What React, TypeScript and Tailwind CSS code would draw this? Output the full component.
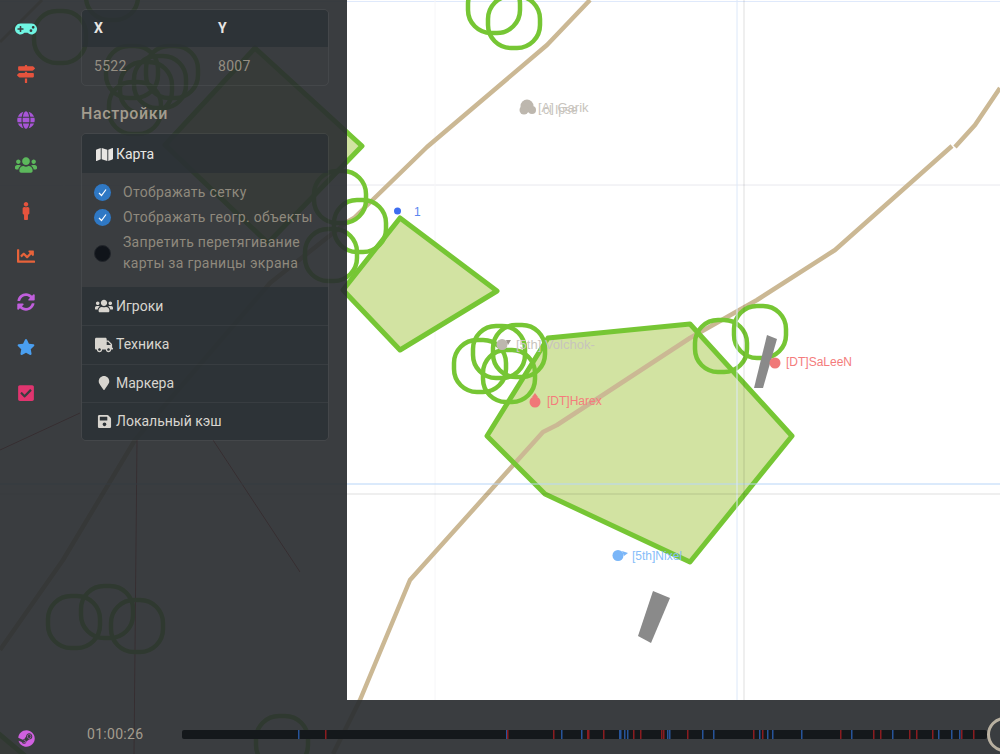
import React from "react";
import {
  FaGamepad,
  FaMapSigns,
  FaGlobe,
  FaUsers,
  FaMale,
  FaChartLine,
  FaSyncAlt,
  FaStar,
  FaCheckSquare,
  FaSteam,
  FaMap,
  FaTruck,
  FaMapMarker,
  FaSave,
} from "react-icons/fa";

const railIcons = [
  { Icon: FaGamepad, color: "text-[#6ff5e2]", size: 22 },
  { Icon: FaMapSigns, color: "text-[#e5533d]", size: 18 },
  { Icon: FaGlobe, color: "text-[#a855d8]", size: 18 },
  { Icon: FaUsers, color: "text-[#5cb85c]", size: 22 },
  { Icon: FaMale, color: "text-[#e5533d]", size: 18 },
  { Icon: FaChartLine, color: "text-[#e8633a]", size: 18 },
  { Icon: FaSyncAlt, color: "text-[#c05fdc]", size: 18 },
  { Icon: FaStar, color: "text-[#4a9ff0]", size: 18 },
  { Icon: FaCheckSquare, color: "text-[#e0356f]", size: 18 },
];

const menuRows = [
  { Icon: FaUsers, label: "Игроки", size: 18 },
  { Icon: FaTruck, label: "Техника", size: 18 },
  { Icon: FaMapMarker, label: "Маркера", size: 14 },
  { Icon: FaSave, label: "Локальный кэш", size: 15 },
];

// x position on the page of each event tick
const blueTicks = [298, 506, 561, 581, 619, 620, 624, 627, 667, 669, 702, 713, 759, 767, 772, 801, 851, 892, 938, 951, 959];
const redTicks = [325, 507, 553, 587, 588, 603, 633, 640, 661, 663, 687, 753, 762, 840, 873, 880, 909, 916, 932, 961, 973];

const polygons = [
  "548,338 690,324 792,436 690,562 545,494 487,436",
  "400,218 497,291 400,350 343,290",
  "255,48 362,146 268,243 165,145",
  "-20,718 30,760 -20,770",
];

const rings = [
  [494, 7], [514, 22], [340, 197], [360, 226], [331, 255],
  [480, 366], [499, 352], [519, 351], [509, 376], [721, 346], [760, 332],
  [60, 37], [112, -6], [74, 622], [107, 612], [137, 626], [282, 742],
  [132, 72], [160, 82], [172, 72], [135, 108], [146, 88],
];

function MapLayer() {
  return (
    <svg className="absolute inset-0" width="1000" height="754" viewBox="0 0 1000 754">
      <rect width="1000" height="754" fill="#ffffff" />
      <g fill="none" strokeWidth="1">
        <path d="M0 1.5H1000" stroke="#dfe9fb" />
        <path d="M0 185H1000" stroke="#e8e8ee" />
        <path d="M435 0V754M64 0V754" stroke="#f6f6f8" />
      </g>
      {/* fills go under the road, outlines over it */}
      <g fill="#d2e3a2">
        {polygons.map((p) => (
          <polygon key={p} points={p} />
        ))}
      </g>
      <g fill="none" stroke="#cbb894" strokeWidth="4.5" strokeLinejoin="round">
        <path d="M590 0L547 45L427 147L390 183L354 218L347 222L270 283L135 440L63 560L0 650" />
        <path d="M333 754L360 700L410 580L543 432L557 425L690 338L757 300L835 250L952 146" />
        <path d="M955 147L975 125L1000 88" />
        <path d="M0 42L42 0" strokeWidth="3" />
      </g>
      <g fill="none" stroke="#c23a3a" strokeWidth="1">
        <path d="M0 450L80 413M137 440L134 754M213 440L300 572" />
      </g>
      <g fill="none" stroke="#76c634" strokeWidth="5" strokeLinejoin="round">
        {polygons.map((p) => (
          <polygon key={p} points={p} />
        ))}
      </g>
      <g fill="none" stroke="#76c634" strokeWidth="4.5">
        {rings.map(([cx, cy], i) => (
          <rect key={i} x={cx - 26} y={cy - 26} width="52" height="52" rx="23" />
        ))}
      </g>
      <g fill="none" strokeWidth="1">
        <path d="M0 484H1000" stroke="#b7d5f8" />
        <path d="M737 0V700" stroke="#dce8f9" />
        <path d="M0 494H1000M744 0V700" stroke="#000000" strokeOpacity="0.13" />
      </g>
      <g fill="#8a8a8a">
        <polygon points="767,335 777,339 763,388 754,388" />
        <polygon points="653,591 670,598 651,643 638,636" />
      </g>
      <g className="[font-family:'Liberation_Sans',sans-serif]" fontSize="12">
        <circle cx="397.5" cy="211" r="3.5" fill="#3d6df0" />
        <text x="414" y="216" fill="#5a86f0">1</text>
        <circle cx="775" cy="363" r="5.5" fill="#f07878" />
        <text x="786" y="366" fill="#f47c7c">[DT]SaLeeN</text>
        <circle cx="535" cy="402" r="5.5" fill="#f07878" />
        <polygon points="532,397 535,393 538,397" fill="#f07878" />
        <text x="547" y="405" fill="#f47c7c">[DT]Harex</text>
        <circle cx="502" cy="344.5" r="5.5" fill="#bdb7ae" />
        <polygon points="506,340 511,340 508,345" fill="#9c968c" />
        <text x="516" y="349" fontSize="13" fill="#c8c4bd">[5th] Volchok-</text>
        <circle cx="618" cy="555.5" r="5.5" fill="#7ab6f8" />
        <polygon points="622,551 628,553 624,556" fill="#7ab6f8" />
        <text x="632" y="560" fill="#86bdf9">[5th]Nixel</text>
        <circle cx="527" cy="106" r="6.5" fill="#bdb7ae" />
        <circle cx="524" cy="110" r="4.5" fill="#bdb7ae" />
        <circle cx="532" cy="110" r="4" fill="#bdb7ae" />
        <text x="538" y="112" fontSize="13" fill="#c8c4bd">[A] Garik</text>
        <text x="543" y="114" fill="#c8c4bd">cl Ipse</text>
      </g>
    </svg>
  );
}

function CheckRow({ checked, children }: { checked: boolean; children: React.ReactNode }) {
  return (
    <label className="flex items-center gap-3">
      <span
        className={
          checked
            ? "flex h-[17px] w-[17px] shrink-0 items-center justify-center rounded-full bg-[#2f78c4]"
            : "h-[17px] w-[17px] shrink-0 rounded-full border border-[#23272c] bg-[#10141a]"
        }
      >
        {checked && (
          <svg width="11" height="11" viewBox="0 0 11 11" fill="none" stroke="#ffffff" strokeWidth="1.2">
            <path d="M2 6L4.5 8.5L9 2.5" />
          </svg>
        )}
      </span>
      <span className="whitespace-nowrap text-[14px] leading-[21px] tracking-[0.3px] text-[#8f897d]">{children}</span>
    </label>
  );
}

export default function App() {
  return (
    <div className="relative flex h-[754px] w-[1000px] flex-col overflow-hidden bg-white [font-family:Roboto,sans-serif]">
      <MapLayer />

      <div className="relative flex h-[700px] w-[347px] bg-[#292d30]/92">
        {/* icon rail */}
        <div className="flex w-[52px] shrink-0 flex-col items-center pt-[6px]">
          {railIcons.map(({ Icon, color, size }, i) => (
            <div key={i} className={`flex h-[45.5px] shrink-0 items-center justify-center ${color}`}>
              <Icon size={size} />
            </div>
          ))}
        </div>

        <div className="ml-[29px] w-[248px] pt-[9px]">
          <div className="overflow-hidden rounded-[5px] border border-white/5">
            <div className="flex h-[37px] items-center bg-[#2a3135]/80 px-3 text-[14px] font-bold text-[#e8e6e3]">
              <span className="w-[124px]">X</span>
              <span>Y</span>
            </div>
            <div className="flex h-[38px] items-center px-3 text-[14px] tracking-[0.3px] text-[#948e82]">
              <span className="w-[124px]">5522</span>
              <span>8007</span>
            </div>
          </div>

          <h2 className="mt-[18px] text-[16px] font-medium leading-[20px] tracking-[0.6px] text-[#a39c8e]">Настройки</h2>

          <div className="mt-[9px] overflow-hidden rounded-[5px] border border-white/5">
            <div className="flex h-[39px] items-center gap-[3px] bg-[#2a3135]/80 px-[13px] pt-[1px] text-[14px] text-[#e8e6e3]">
              <span className="flex w-[18px] justify-center"><FaMap size={17} /></span>
              Карта
            </div>
            <div className="flex h-[114px] flex-col gap-1 px-3 pt-[9px]">
              <CheckRow checked>Отображать сетку</CheckRow>
              <CheckRow checked>Отображать геогр. объекты</CheckRow>
              <CheckRow checked={false}>
                Запретить перетягивание
                <br />
                карты за границы экрана
              </CheckRow>
            </div>
            {menuRows.map(({ Icon, label, size }, i) => (
              <div
                key={label}
                className={`flex h-[38.3px] items-center gap-[3px] bg-[#2a3135]/80 px-[13px] text-[14px] text-[#d8d5cf] ${
                  i > 0 ? "border-t border-white/5" : ""
                }`}
              >
                <span className="flex w-[18px] justify-center"><Icon size={size} /></span>
                {label}
              </div>
            ))}
          </div>
        </div>
      </div>

      {/* timeline */}
      <div className="relative flex h-[54px] items-center bg-[#292d30]/92 pt-[14px]">
        <div className="flex w-[52px] shrink-0 justify-center pt-[8px] text-[#d060e0]">
          <FaSteam size={17} />
        </div>
        <span className="ml-[35px] w-[95px] shrink-0 text-[14px] tracking-[0.3px] text-[#a39c8e]">01:00:26</span>
        <svg className="shrink-0 rounded-[2px]" width="805" height="9" viewBox="182 0 805 9">
          <rect x="182" width="805" height="9" fill="#14181b" />
          {blueTicks.map((x) => (
            <rect key={x} x={x} width="1.5" height="9" fill="#27549a" />
          ))}
          {redTicks.map((x) => (
            <rect key={x} x={x} width="1.5" height="9" fill="#8a1c20" />
          ))}
        </svg>
        <div className="flex h-[35px] w-[35px] shrink-0 items-center justify-center rounded-full border-[3px] border-[#b8b0a0]">
          <span className="h-[13px] w-[3px] bg-[#b8b0a0]" />
        </div>
      </div>
    </div>
  );
}
